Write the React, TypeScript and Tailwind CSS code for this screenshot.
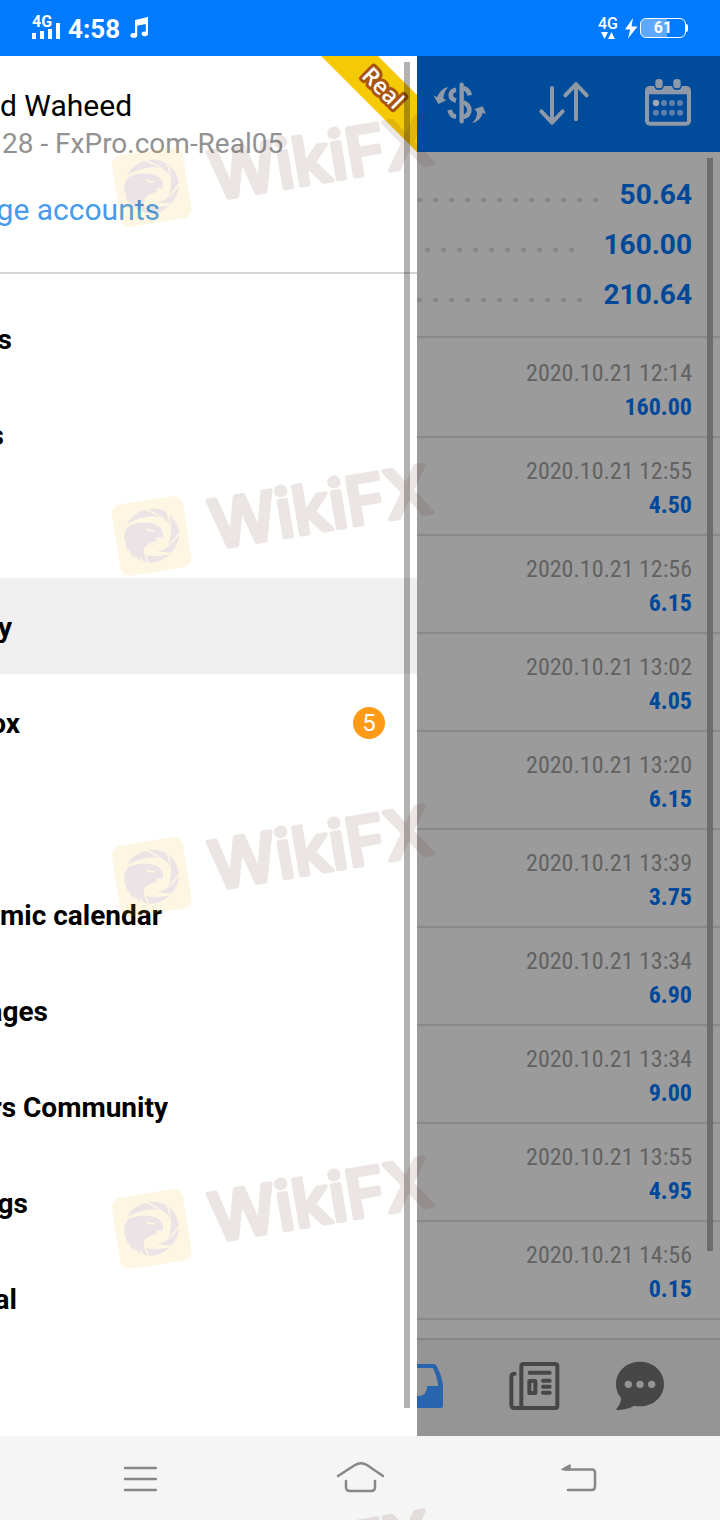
import clsx from "clsx";

type MenuItem = {
  id: string;
  label?: string;
  // visible part of the label while the drawer is still sliding in
  clip?: string;
  badge?: number;
  active?: boolean;
};

const MENU: MenuItem[] = [
  { id: "quotes", label: "s", clip: "w-3" },
  { id: "charts", label: "s", clip: "w-1" },
  { id: "trade" },
  { id: "history", label: "y", clip: "w-3", active: true },
  { id: "mailbox", label: "ox", clip: "w-5", badge: 5 },
  { id: "news" },
  { id: "calendar", label: "mic calendar" },
  { id: "messages", label: "ages", clip: "w-12" },
  { id: "community", label: "rs Community", clip: "w-[168px]" },
  { id: "settings", label: "gs", clip: "w-7" },
  { id: "journal", label: "al", clip: "w-[17px]" },
];

const TOTALS = [
  { value: "50.64", leader: "mr-4" },
  { value: "160.00", leader: "mr-6" },
  { value: "210.64", leader: "mr-4" },
];

const DEALS = [
  { time: "2020.10.21 12:14", amount: "160.00" },
  { time: "2020.10.21 12:55", amount: "4.50" },
  { time: "2020.10.21 12:56", amount: "6.15" },
  { time: "2020.10.21 13:02", amount: "4.05" },
  { time: "2020.10.21 13:20", amount: "6.15" },
  { time: "2020.10.21 13:39", amount: "3.75" },
  { time: "2020.10.21 13:34", amount: "6.90" },
  { time: "2020.10.21 13:34", amount: "9.00" },
  { time: "2020.10.21 13:55", amount: "4.95" },
  { time: "2020.10.21 14:56", amount: "0.15" },
];

const WATERMARKS = ["top-[108px]", "top-[457px]", "top-[798px]", "top-[1150px]", "top-[1503px]"];

function StatusBar() {
  return (
    <header className="flex h-14 items-center bg-[#007aff] pr-8 pl-8 text-white">
      <svg width="30" height="28" viewBox="0 0 30 28" fill="currentColor" aria-hidden="true">
        <text x="0" y="13" fontSize="16" fontWeight="700">
          4G
        </text>
        <rect x="0" y="19" width="4" height="6" />
        <rect x="8" y="17" width="4" height="8" />
        <rect x="16" y="15" width="4" height="10" />
        <rect x="24" y="9" width="4" height="16" />
      </svg>
      <span className="ml-1.5 pt-0.5 text-[26px] leading-8 font-bold">4:58</span>
      <svg className="ml-2.5" width="20" height="24" viewBox="0 0 20 24" fill="currentColor" aria-hidden="true">
        <path d="M5 4 18 1v17h-2.200V8L7.200 9.800v10H5z" />
        <ellipse cx="3.800" cy="19.500" rx="3.400" ry="2.400" />
        <ellipse cx="14.800" cy="17.800" rx="3.200" ry="2.400" />
      </svg>

      <svg className="ml-auto" width="42" height="28" viewBox="0 0 42 28" fill="currentColor" aria-hidden="true">
        <text x="0" y="15" fontSize="16" fontWeight="500">
          4G
        </text>
        <path d="M3 18h7l-3.500 7zM10 25h7l-3.500-7z" />
        <path d="M35 4 27 15.500h5.200L30 24.500l9.500-12h-6z" />
      </svg>
      <div className="flex items-center">
        <span className="flex h-5 w-[46px] items-center justify-center rounded-md border border-white bg-linear-to-r from-[#5ea8ff] from-60% to-[#007aff] to-60% text-base leading-4 font-bold">
          61
        </span>
        <span className="h-2 w-0.5 rounded-r bg-white" />
      </div>
    </header>
  );
}

function RealRibbon() {
  return (
    <svg className="absolute top-0 right-0" width="96" height="96" viewBox="0 0 96 96" aria-hidden="true">
      <path d="M0 0H57L96 39V96Z" fill="#f4c905" />
      <text
        x="62"
        y="40"
        transform="rotate(45 62 32)"
        textAnchor="middle"
        fontFamily="'Open Sans', sans-serif"
        fontSize="23"
        fontWeight="600"
        fill="#fff"
        stroke="#a9540f"
        strokeWidth="6"
        strokeLinejoin="round"
        paintOrder="stroke"
      >
        Real
      </text>
    </svg>
  );
}

function Drawer() {
  return (
    <aside className="relative overflow-hidden bg-white">
      <div className="h-[218px] border-b-2 border-[#d4d4d4] pt-8">
        <p className="text-[30px] leading-9 whitespace-pre text-black">d Waheed</p>
        <p className="pl-0.5 text-[28px] leading-10 text-[#929292]">28 - FxPro.com-Real05</p>
        <button type="button" className="mt-6 flex w-40 justify-end overflow-hidden pt-0.5 text-[30px] leading-10 whitespace-nowrap text-[#479bea]">
          ge accounts
        </button>
      </div>
      <RealRibbon />

      <nav className="pt-4">
        {MENU.map((item) => (
          <button
            key={item.id}
            type="button"
            aria-label={item.label ? undefined : item.id}
            className={clsx("flex h-24 w-full items-center pr-8", item.active && "bg-[#efefef]")}
          >
            {item.label && (
              <span
                className={clsx(
                  "pt-1 text-[28px] leading-9 font-bold whitespace-nowrap text-black",
                  item.clip && "flex justify-end overflow-hidden",
                  item.clip
                )}
              >
                {item.label}
              </span>
            )}
            {item.badge && (
              <span className="mt-0.5 ml-auto flex size-8 items-center justify-center rounded-full bg-[#ff9b17] text-[24px] text-white">
                {item.badge}
              </span>
            )}
          </button>
        ))}
      </nav>

      {/* Scrollbar */}
      <div className="absolute top-1.5 right-[7px] bottom-7 w-1.5 bg-black/30" />
    </aside>
  );
}

function Toolbar() {
  return (
    <div className="flex h-24 justify-end overflow-hidden bg-[#004c9b] text-[#8f99a8]">
      <button type="button" aria-label="Symbols" className="flex w-[104px] shrink-0 items-center justify-center">
        <svg width="56" height="48" viewBox="36 60 168 144" fill="none" stroke="currentColor">
          <path d="M125 74V184" strokeWidth="13" strokeLinecap="round" />
          <path d="M108 89C88 93 86 116 108 122M108 170C98 169 92 163 89 150" strokeWidth="14" />
          <path d="M130 84C141 87 147 96 149 106M130 127C154 136 154 165 130 171" strokeWidth="14" />
          <path d="M40 106 55 132 79 121 70 115Q70 97 85 81 60 86 51 112Z" fill="currentColor" stroke="none" />
          <path d="M198 162 188 139 163 147 171 156Q172 174 157 189 183 182 188 158Z" fill="currentColor" stroke="none" />
        </svg>
      </button>
      <button type="button" aria-label="Sort" className="flex w-[104px] shrink-0 items-center justify-center">
        <svg
          width="56"
          height="48"
          viewBox="348 60 168 144"
          fill="none"
          stroke="currentColor"
          strokeWidth="12"
          strokeLinecap="round"
          strokeLinejoin="round"
        >
          <path d="M396 84V188M364 154 396 188 428 154" />
          <path d="M468 178V72M436 106 468 72 500 106" />
        </svg>
      </button>
      <button type="button" aria-label="Period" className="flex w-[104px] shrink-0 items-center justify-center">
        <svg width="56" height="56" viewBox="660 48 168 168" fill="none" stroke="currentColor">
          <rect x="681" y="84" width="126" height="107" rx="8" strokeWidth="12" />
          <path d="M681 94H807" strokeWidth="18" />
          <rect x="702" y="54" width="30" height="36" rx="14" fill="#004c9b" stroke="none" />
          <rect x="756" y="54" width="30" height="36" rx="14" fill="#004c9b" stroke="none" />
          <rect x="706" y="57" width="22" height="28" rx="10" fill="currentColor" stroke="none" />
          <rect x="760" y="57" width="22" height="28" rx="10" fill="currentColor" stroke="none" />
          <g fill="#5f80ab" stroke="none">
            <circle cx="708" cy="129" r="9.500" fill="#a3a9b3" />
            <circle cx="732" cy="129" r="9" />
            <circle cx="756" cy="129" r="9" />
            <circle cx="780" cy="129" r="9" />
            <circle cx="708" cy="158" r="9" />
            <circle cx="732" cy="158" r="9" />
            <circle cx="756" cy="158" r="9" />
            <circle cx="780" cy="158" r="9" />
          </g>
        </svg>
      </button>
    </div>
  );
}

function TabBar() {
  return (
    <nav className="mt-auto flex h-[98px] justify-end overflow-hidden border-t-2 border-[#868686] bg-[#959595] pr-7 text-[#474747]">
      <button type="button" aria-label="History" className="flex w-[105px] shrink-0 items-center pl-4">
        <svg width="50" height="54" viewBox="-21 153 150 162" fill="#2965ae" fillRule="evenodd">
          <path d="M54 162H103Q107 162 110 168L120 190Q129 215 129 232V288Q129 294 123 294H-15Q-21 294-21 288V232Q-21 215-12 190L-2 168Q1 162 5 162ZM54 174H11Q8 174 6 180L-7 226H26Q28 258 54 258T82 228H112Q115 226 114 222 110 198 101 178 99 174 96 174Z" />
        </svg>
      </button>
      <button type="button" aria-label="News" className="flex w-[105px] shrink-0 items-center justify-center">
        <svg
          width="51"
          height="54"
          viewBox="326 153 153 162"
          fill="none"
          stroke="currentColor"
          strokeWidth="12"
          strokeLinecap="round"
          strokeLinejoin="round"
        >
          <rect x="363" y="162" width="108" height="132" rx="6" />
          <path d="M343 191Q333 191 333 200V284Q333 294 343 294H366" />
          <path d="M388 188H448M428 212H448M428 230H448M428 248H448" />
          <rect x="387" y="213" width="18" height="36" />
        </svg>
      </button>
      <button type="button" aria-label="Messages" className="flex w-[105px] shrink-0 items-center justify-center">
        <svg width="50" height="54" viewBox="642 153 150 162" fill="currentColor">
          <path d="M717 155C758 155 789 185 789 222S758 289 717 289Q708 289 700 287 680 299 648 300 643 299 648 294 661 279 660 263 645 247 645 222C645 185 676 155 717 155Z" />
          <g fill="#959595">
            <circle cx="682" cy="223" r="11" />
            <circle cx="717" cy="223" r="11" />
            <circle cx="752" cy="223" r="11" />
          </g>
        </svg>
      </button>
    </nav>
  );
}

function HistoryPanel() {
  return (
    <main className="relative flex min-w-0 flex-col bg-[#9b9b9b]">
      <Toolbar />

      {/* Totals */}
      <section className="border-b-2 border-[#898989] pt-[18px] pb-4">
        {TOTALS.map((total) => (
          <div key={total.value} className="flex h-[50px] items-center pr-7">
            <span
              className={clsx(
                "mt-2.5 h-1 flex-1 bg-[radial-gradient(circle,#858585_2px,transparent_3px)] bg-[length:16px_4px] bg-right bg-repeat-x",
                total.leader
              )}
            />
            <span className="text-[28px] leading-9 font-bold text-[#00489a]">{total.value}</span>
          </div>
        ))}
      </section>

      {/* Deals */}
      <ul className="pt-0.5">
        {DEALS.map((deal, i) => (
          <li
            key={i}
            className="h-[98px] border-b-2 border-[#898989] pt-4 pr-7 text-right font-['Roboto_Condensed','Liberation_Sans_Narrow',Roboto,sans-serif] text-[24px] leading-[34px]"
          >
            <p className="text-[#626262]">{deal.time}</p>
            <p className="font-bold text-[#00489a]">{deal.amount}</p>
          </li>
        ))}
      </ul>

      <TabBar />
      {/* Scrollbar */}
      <div className="absolute top-[102px] right-[7px] bottom-[185px] w-1.5 bg-[#6d6d6d]" />
    </main>
  );
}

function SystemNav() {
  return (
    <footer className="flex h-[84px] items-center justify-around bg-[#f5f5f5] px-[30px] pb-0.5 text-[#888]">
      <button type="button" aria-label="Recent apps" className="flex flex-1 justify-center">
        <svg width="34" height="48" viewBox="0 0 34 48" stroke="currentColor" strokeWidth="2.500" strokeLinecap="round">
          <path d="M2 15H33M2 26H33M2 37H33" />
        </svg>
      </button>
      <button type="button" aria-label="Home" className="flex flex-1 justify-center">
        <svg width="50" height="48" viewBox="0 0 50 48" fill="none" stroke="currentColor" strokeWidth="2.500" strokeLinecap="round">
          <path d="M3 23 20 12Q26 8.500 32 12L48 23" />
          <path d="M11 28V34Q11 38 15 38H36Q40 38 40 34V28" />
        </svg>
      </button>
      <button type="button" aria-label="Back" className="flex flex-1 justify-center">
        <svg width="40" height="48" viewBox="0 0 40 48" fill="none" stroke="currentColor" strokeWidth="2.500" strokeLinecap="round">
          <path d="M5 16.500H32Q35 16.500 35 20V33Q35 37 32 37H8" />
          <path d="M2 16.500 10 12V17Z" fill="currentColor" strokeWidth="1.500" strokeLinejoin="round" />
        </svg>
      </button>
    </footer>
  );
}

function Watermark({ className }: { className: string }) {
  return (
    <svg
      className={clsx("pointer-events-none absolute left-[110px] opacity-[0.12]", className)}
      width="333"
      height="127"
      viewBox="62 22 999 381"
      aria-hidden="true"
    >
      <rect x="79" y="151" width="216" height="216" rx="28" transform="rotate(-9 187 259)" fill="#f0bc24" />
      <g fill="#612630">
        <path d="M113 223Q129 193 166 180L212 201Q164 194 113 223Z" />
        <path d="M174 178Q205 172 232 189L243 229Q231 203 174 178Z" />
        <path d="M240 194Q264 215 269 247L236 290Q252 254 240 194Z" />
        <path d="M269 255Q268 286 245 309L202 305Q242 299 269 255Z" />
        <path d="M240 315Q215 338 180 340L170 316Q190 322 240 315Z" />
        <path d="M105 270Q104 242 116 231 145 214 186 220 211 226 218 241 224 254 220 266 210 261 199 264 210 272 190 277 169 283 163 299 162 312 175 339 158 337 151 320 150 326 153 333 141 330 133 308 134 316 138 326 126 321 119 299L117 305Q106 290 110 272L105 278Z" />
      </g>
      <path d="M171 238Q182 246 195 243" fill="none" stroke="#f0bc24" strokeWidth="5" />
      <text
        x="374"
        y="298"
        transform="rotate(-9.500 374 298)"
        fontFamily="Inter, 'Open Sans', sans-serif"
        fontSize="200"
        fontWeight="500"
        fill="#61302c"
        stroke="#61302c"
        strokeWidth="13"
        strokeLinejoin="round"
      >
        WikiFX
      </text>
    </svg>
  );
}

export default function App() {
  return (
    <div className="relative flex min-h-screen flex-col overflow-hidden font-[Roboto,sans-serif]">
      <StatusBar />
      <div className="grid flex-1 grid-cols-[139fr_101fr]">
        <Drawer />
        <HistoryPanel />
      </div>
      <SystemNav />
      {WATERMARKS.map((top) => (
        <Watermark key={top} className={top} />
      ))}
    </div>
  );
}
